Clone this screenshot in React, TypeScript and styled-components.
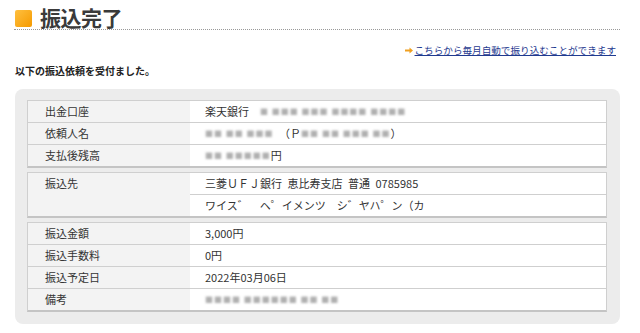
import React from "react";
import styled, { createGlobalStyle } from "styled-components";

const GlobalStyle = createGlobalStyle`
	body {
		margin: 0;
		background: #ffffff;
		font-family: "Noto Sans CJK JP", "Noto Sans", sans-serif;
		color: #333333;
	}
`;

type Row = { label: string; values: React.ReactNode[] };

const Blur = ({ children }: { children?: React.ReactNode }) => <Blurred>{children}</Blurred>;

const groups: Row[][] = [
	[
		{ label: "出金口座", values: [<>楽天銀行　<Blur>■ ■■■ ■■■ ■■■■ ■■■■</Blur></>] },
		{ label: "依頼人名", values: [<><Blur>■■ ■■ ■■■</Blur>　（Ｐ<Blur>■■ ■■ ■■■ ■■</Blur>）</>] },
		{ label: "支払後残高", values: [<><Blur>■■ ■■■■■</Blur>円</>] },
	],
	[
		{
			label: "振込先",
			values: ["三菱ＵＦＪ銀行\u2002恵比寿支店\u2002普通\u20020785985", "ワイス゛　ヘ゜イメンツ　シ゛ヤハ゜ン（カ"],
		},
	],
	[
		{ label: "振込金額", values: ["3,000円"] },
		{ label: "振込手数料", values: ["0円"] },
		{ label: "振込予定日", values: ["2022年03月06日"] },
		{ label: "備考", values: [<Blur>■■■■ ■■■■■■ ■■ ■■</Blur>] },
	],
];

const App = () => {
	return (
		<Page>
			<GlobalStyle />
			<TitleBar>
				<Square />
				<Title>振込完了</Title>
			</TitleBar>
			<LinkRow>
				<svg width="8" height="7" viewBox="0 0 8 7">
					<path d="M0 2.5h4.5V0.5L8 3.5 4.5 6.5V4.5H0z" fill="#f0a020" />
				</svg>
				<MonthlyLink href="#">こちらから毎月自動で振り込むことができます</MonthlyLink>
			</LinkRow>
			<Message>以下の振込依頼を受付ました。</Message>
			<Panel>
				{groups.map((rows, gi) => (
					<Table key={gi}>
						{rows.map((row) => (
							<TableRow key={row.label}>
								<Label>{row.label}</Label>
								<Values>
									{row.values.map((v, vi) => (
										<Value key={vi}>{v}</Value>
									))}
								</Values>
							</TableRow>
						))}
					</Table>
				))}
			</Panel>
		</Page>
	);
};

export default App;

const Page = styled.div`
	width: 640px;
	padding: 7px 20px 0 15px;
	box-sizing: border-box;
`;

const TitleBar = styled.div`
	display: flex;
	align-items: center;
	gap: 8px;
	height: 22px;
	border-bottom: 1px dotted #999999;
	margin-left: -1px;
	padding-left: 1px;
`;

const Square = styled.div`
	width: 17px;
	height: 17px;
	border-radius: 2px;
	background: linear-gradient(to bottom right, #ffc040, #f59a00);
`;

const Title = styled.h1`
	margin: 0;
	font-size: 21px;
	font-weight: 700;
	color: #3a3a3a;
	line-height: 22px;
	position: relative;
	top: -1px;
	letter-spacing: -0.5px;
`;

const LinkRow = styled.div`
	display: flex;
	justify-content: flex-end;
	align-items: center;
	gap: 2px;
	margin-top: 13px;
	padding-right: 4px;
	height: 14px;
`;

const MonthlyLink = styled.a`
	font-size: 9.6px;
	color: #1f3a8f;
	text-decoration: underline;
`;

const Message = styled.p`
	margin: 7px 0 0;
	font-size: 10px;
	font-weight: 700;
	color: #222222;
	line-height: 14px;
`;

const Panel = styled.div`
	margin-top: 11px;
	background: #ececec;
	border-radius: 8px;
	padding: 11px 13px 12px 12px;
	display: flex;
	flex-direction: column;
	gap: 4px;
`;

const Table = styled.div`
	background: #ffffff;
	border: 1px solid #cfcfcf;
	border-bottom: 2px solid #c4c4c4;
`;

const TableRow = styled.div`
	display: flex;
	& + & {
		border-top: 1px solid #cfcfcf;
	}
`;

const Label = styled.div`
	flex: 0 0 145px;
	padding-left: 17px;
	background: #f3f3f3;
	font-size: 11px;
	line-height: 21px;
	color: #333333;
`;

const Values = styled.div`
	flex: 1;
	display: flex;
	flex-direction: column;
`;

const Value = styled.div`
	height: 21px;
	display: flex;
	align-items: center;
	padding-left: 15px;
	font-size: 11px;
	line-height: 21px;
	color: #333333;
	white-space: pre;
	& + & {
		border-top: 1px solid #cfcfcf;
	}
`;

const Blurred = styled.span`
	display: inline-block;
	color: #b0b0b0;
	font-size: 8px;
	line-height: 10px;
	filter: blur(1.3px);
	letter-spacing: 1px;
`;
